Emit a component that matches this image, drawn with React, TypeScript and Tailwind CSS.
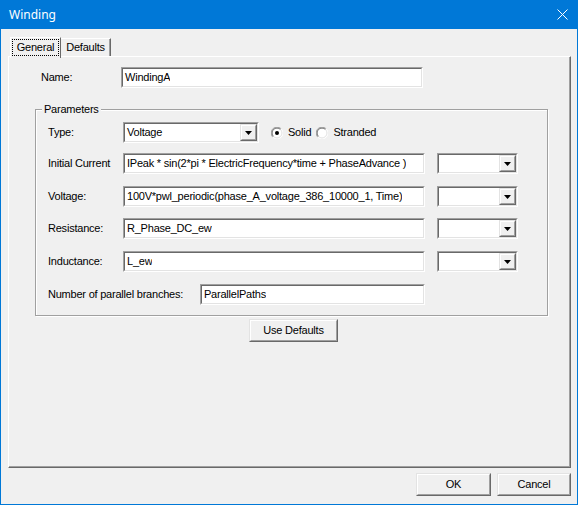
import React from "react";

function Sunken({ className = "", children }: { className?: string; children?: React.ReactNode }) {
  return (
    <div className={`border border-t-[#a0a0a0] border-l-[#a0a0a0] border-r-white border-b-white ${className}`}>
      <div className="h-full border border-t-[#696969] border-l-[#696969] border-r-[#e3e3e3] border-b-[#e3e3e3] bg-white flex items-center">
        {children}
      </div>
    </div>
  );
}

function Raised({ className = "", children }: { className?: string; children?: React.ReactNode }) {
  return (
    <div className={`border border-t-[#e3e3e3] border-l-[#e3e3e3] border-r-[#696969] border-b-[#696969] bg-[#f0f0f0] ${className}`}>
      <div className="h-full border border-t-white border-l-white border-r-[#a0a0a0] border-b-[#a0a0a0] flex items-center justify-center">
        {children}
      </div>
    </div>
  );
}

function Arrow() {
  return (
    <svg width="7" height="4" viewBox="0 0 7 4" className="block">
      <path d="M0 0H7L3.5 4Z" fill="#000" />
    </svg>
  );
}

function TextBox({ value, w, className = "" }: { value: string; w: string; className?: string }) {
  return (
    <Sunken className={`${w} h-[21px] ${className}`}>
      <span className="pl-[2px] whitespace-nowrap overflow-hidden">{value}</span>
    </Sunken>
  );
}

function Combo({ value, w, className = "" }: { value?: string; w: string; className?: string }) {
  return (
    <Sunken className={`${w} h-[21px] ${className}`}>
      <span className="flex-1 pl-[2px] whitespace-nowrap overflow-hidden">{value}</span>
      <Raised className="w-[17px] h-[17px]">
        <Arrow />
      </Raised>
    </Sunken>
  );
}

function Radio({ checked }: { checked?: boolean }) {
  return (
    <svg width="12" height="12" viewBox="0 0 12 12" className="block">
      <circle cx="6" cy="6" r="5.5" fill="#fff" />
      <path d="M1.8 10.2A5.5 5.5 0 0 1 10.2 1.8" stroke="#a0a0a0" strokeWidth="1" fill="none" />
      <path d="M10.2 1.8A5.5 5.5 0 0 1 1.8 10.2" stroke="#ffffff" strokeWidth="1" fill="none" />
      <path d="M2.5 9.5A4.5 4.5 0 0 1 9.5 2.5" stroke="#696969" strokeWidth="1" fill="none" />
      <path d="M9.5 2.5A4.5 4.5 0 0 1 2.5 9.5" stroke="#e3e3e3" strokeWidth="1" fill="none" />
      {checked && <circle cx="6" cy="6" r="2" fill="#000" />}
    </svg>
  );
}

function Row({ label, value, mt }: { label: string; value: string; mt: string }) {
  return (
    <div className={`flex items-center pl-[12px] ${mt}`}>
      <span className="w-[75px] whitespace-nowrap">{label}</span>
      <TextBox value={value} w="w-[302px]" />
      <Combo w="w-[81px]" className="ml-[12px]" />
    </div>
  );
}

export default function App() {
  return (
    <div className="w-[578px] h-[505px] flex flex-col bg-[#f0f0f0] text-black text-[11px] leading-[13px] font-['Liberation_Sans',Arial,sans-serif] tracking-[-0.22px] overflow-hidden">
      <div className="h-[29px] shrink-0 bg-[#0078d7] flex items-center justify-between pl-[9px] pr-[10px] text-white">
        <span className="text-[12px] tracking-normal font-['Noto_Sans',sans-serif]">Winding</span>
        <svg width="11" height="11" viewBox="0 0 11 11" className="block">
          <path d="M0.5 0.5L10.5 10.5M10.5 0.5L0.5 10.5" stroke="#fff" strokeWidth="1" />
        </svg>
      </div>
      <div className="flex-1 flex flex-col border-x border-b border-[#0078d7] pt-[8px] pl-[7px]">
        <div className="flex items-end pl-[2px] h-[19px]">
          <div className="relative z-10 -mb-[2px] w-[51px] h-[21px] border-t border-l border-r border-t-white border-l-white border-r-[#696969] bg-[#f0f0f0] px-[1px] pt-[1px]">
            <div className="h-[17px] border border-dotted border-black flex items-center justify-center">General</div>
          </div>
          <div className="w-[50px] h-[18px] border-t border-r border-t-white border-r-[#696969] shadow-[inset_-1px_0_0_#a0a0a0] flex items-center justify-center">Defaults</div>
        </div>
        <div className="w-[563px] h-[412px] border border-t-white border-l-white border-r-[#696969] border-b-[#696969] shadow-[inset_-1px_-1px_0_#a0a0a0] flex flex-col">
          <div className="flex items-center pl-[32px] mt-[10px]">
            <span className="w-[80px]">Name:</span>
            <TextBox value="WindingA" w="w-[302px]" />
          </div>
          <div className="ml-[26px] mt-[21px] w-[513px] h-[207px] border border-[#a0a0a0] shadow-[inset_1px_1px_0_#fff,1px_1px_0_#fff] flex flex-col">
            <div className="-mt-[7px] ml-[6px] self-start px-[2px] bg-[#f0f0f0]">Parameters</div>
            <div className="flex items-center pl-[12px] mt-[6px]">
              <span className="w-[75px]">Type:</span>
              <Combo value="Voltage" w="w-[136px]" />
              <div className="ml-[12px] flex items-center gap-[5px]">
                <Radio checked />
                <span>Solid</span>
              </div>
              <div className="ml-[5px] flex items-center gap-[5px]">
                <Radio />
                <span>Stranded</span>
              </div>
            </div>
            <Row mt="mt-[10px]" label="Initial Current" value="IPeak * sin(2*pi * ElectricFrequency*time + PhaseAdvance )" />
            <Row mt="mt-[12px]" label="Voltage:" value="100V*pwl_periodic(phase_A_voltage_386_10000_1, Time)" />
            <Row mt="mt-[11px]" label="Resistance:" value="R_Phase_DC_ew" />
            <Row mt="mt-[12px]" label="Inductance:" value="L_ew" />
            <div className="flex items-center pl-[12px] mt-[12px]">
              <span className="w-[152px] whitespace-nowrap">Number of parallel branches:</span>
              <TextBox value="ParallelPaths" w="w-[225px]" />
            </div>
          </div>
          <Raised className="ml-[240px] mt-[3px] w-[89px] h-[23px]">Use Defaults</Raised>
        </div>
        <div className="flex justify-end gap-[6px] pr-[6px] mt-[5px]">
          <Raised className="w-[75px] h-[23px]">OK</Raised>
          <Raised className="w-[74px] h-[23px]">Cancel</Raised>
        </div>
      </div>
    </div>
  );
}
